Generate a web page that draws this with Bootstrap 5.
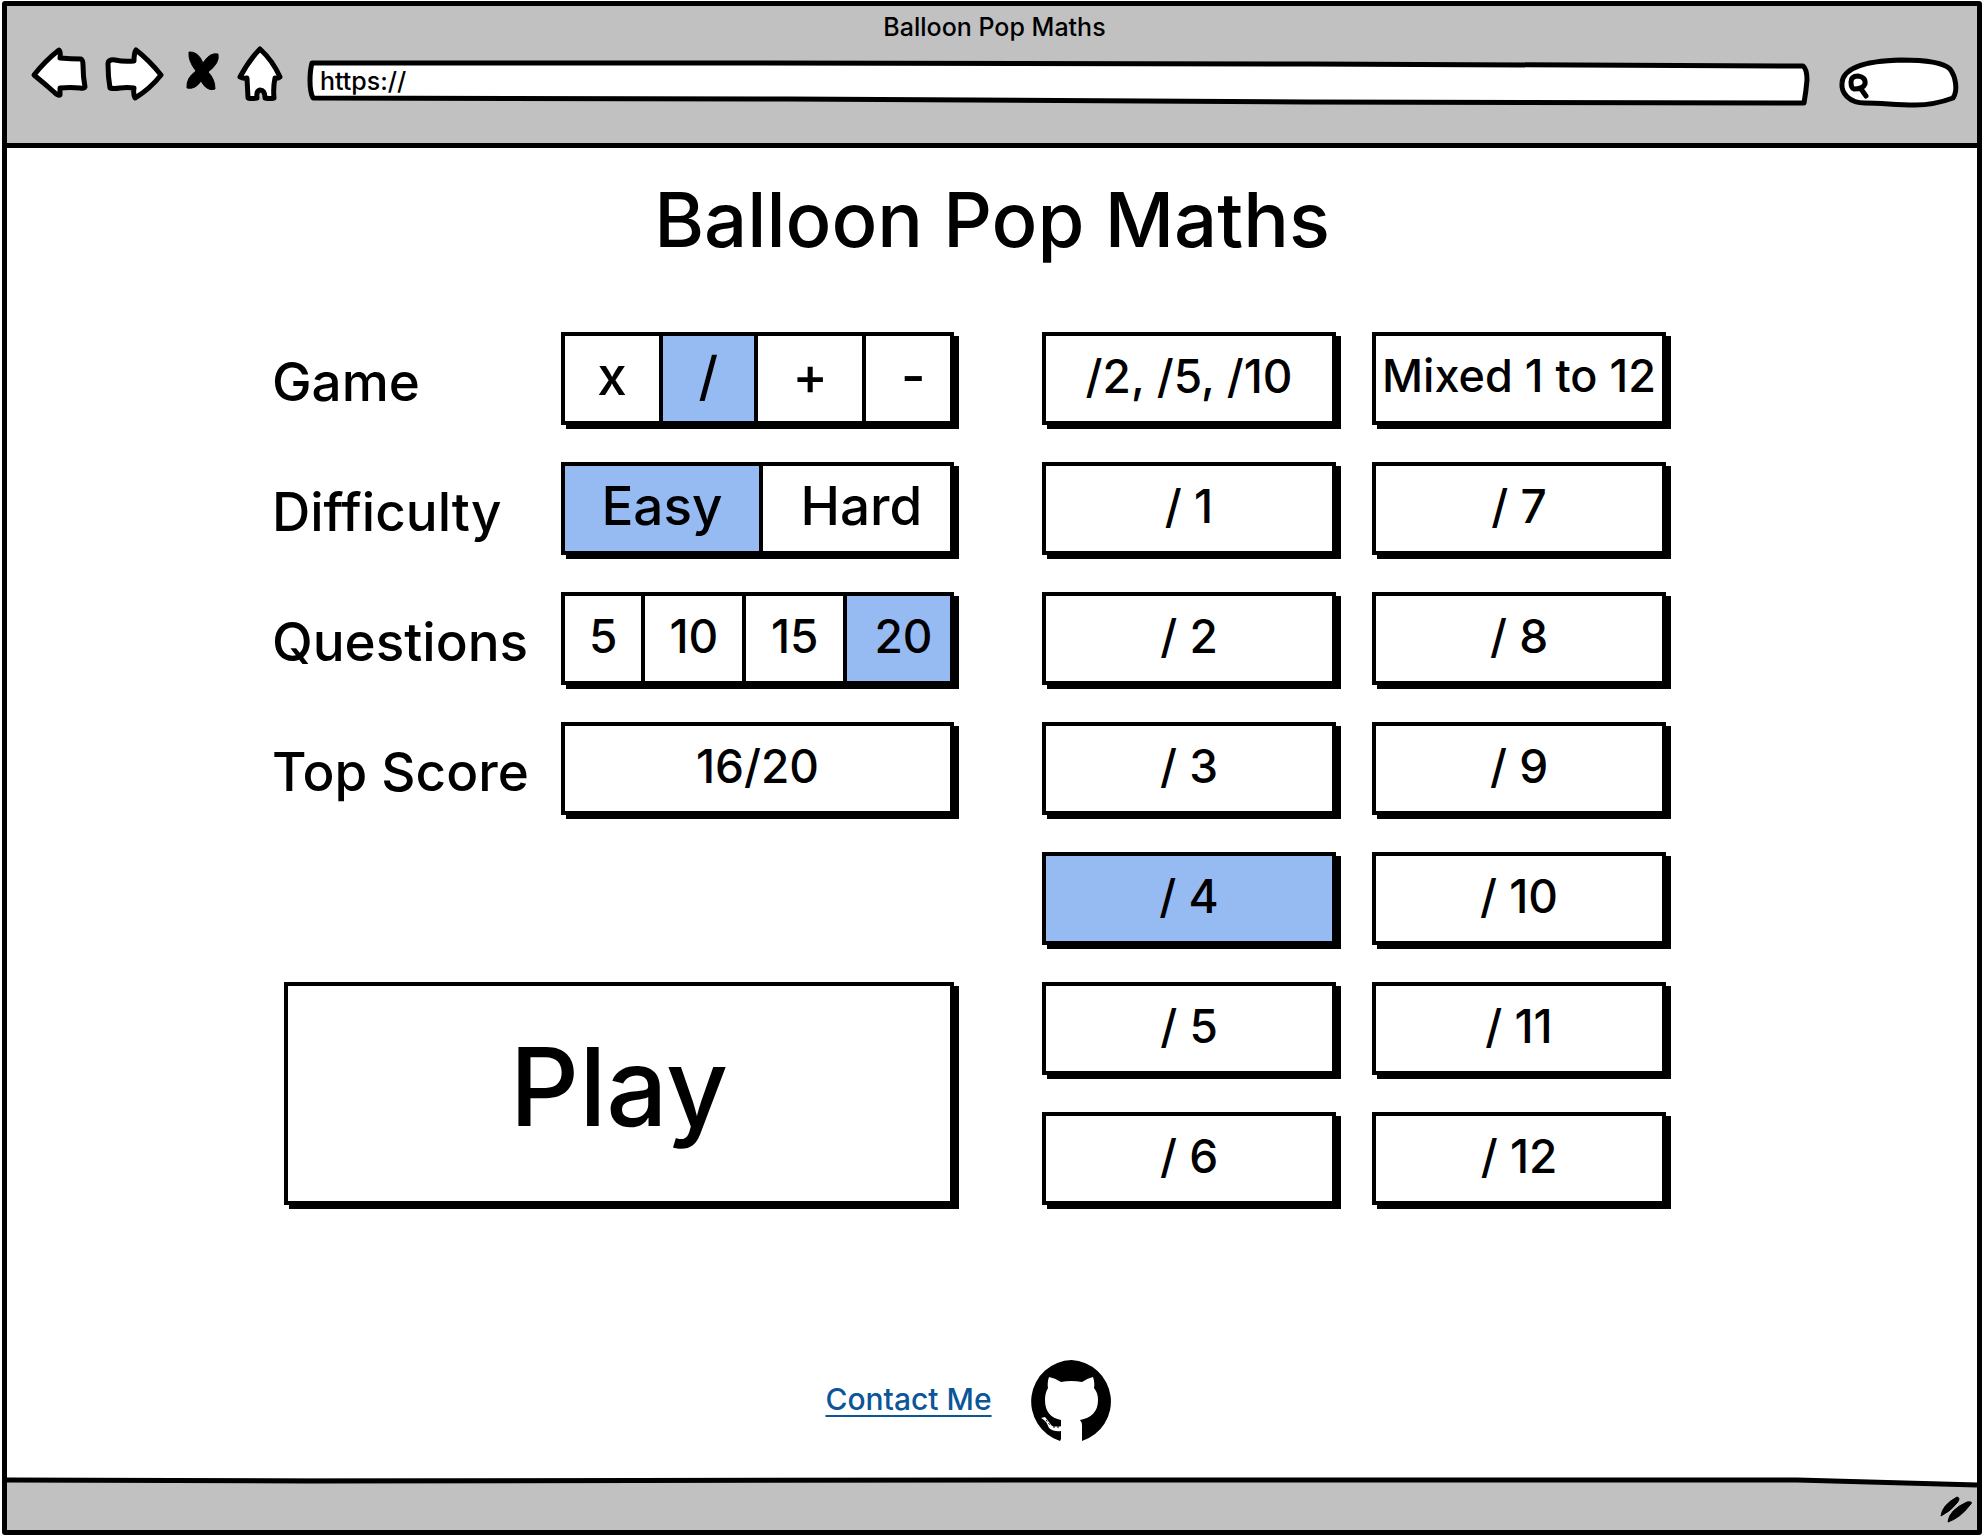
<!DOCTYPE html>
<html lang="en">
<head>
<meta charset="utf-8">
<meta name="viewport" content="width=device-width, initial-scale=1">
<title>Balloon Pop Maths</title>
<link href="https://cdn.jsdelivr.net/npm/bootstrap@5.3.0/dist/css/bootstrap.min.css" rel="stylesheet">
<style>
  :root { --ink: #000; --chrome: #c1c1c1; --pick: #95bbf2; }
  body { font-family: Inter, "Open Sans", sans-serif; font-weight: 500; color: var(--ink); background: #fff; padding: 1px 2px; }
  .frame { min-height: calc(100vh - 2px); border: 5px solid var(--ink); border-radius: 3px; }
  svg { display: block; }
  .sketch { fill: #fff; stroke: var(--ink); stroke-width: 5; stroke-linejoin: round; stroke-linecap: round; }

  /* browser chrome */
  .chrome-top { background: var(--chrome); border-bottom: 5px solid var(--ink); padding: 6px 18px 37px 23px; }
  .chrome-title { font-size: 25px; line-height: 30px; margin-bottom: 4px; }
  .toolbar { height: 60px; gap: 16px; }
  .tool { background: none; border: 0; padding: 0; }
  .address { height: 46px; margin-left: 8px; margin-top: 12px; }
  .finder { width: 120px; height: 52px; margin-left: 14px; margin-top: 9px; }
  .outline { position: absolute; inset: 0; width: 100%; height: 100%; overflow: visible; }
  .outline path { vector-effect: non-scaling-stroke; }
  .field { position: relative; width: 100%; height: 100%; background: none; border: 0; outline: 0; font-size: 25px; line-height: 30px; font-weight: 500; color: var(--ink); padding: 0 12px; }
  .finder .field { padding: 0 16px 0 32px; }
  .chrome-bottom { position: relative; height: 52px; background: var(--chrome); }
  .chrome-bottom .outline { height: 12px; }
  .grip { width: 34px; height: 28px; margin: 17px 3px 0 0; }

  /* page */
  .page-title { font-size: 76px; line-height: 92px; font-weight: 500; padding-top: 25px; margin-bottom: 67px; }
  .shifted { padding-right: 46px; }
  .board { max-width: 1394px; gap: 88px; }
  .settings { gap: 37px; }
  .topics { display: grid; grid-template-columns: 1fr 1fr; gap: 37px 36px; width: 624px; }
  .caption { font-size: 53px; line-height: 64px; margin-top: 18px; white-space: nowrap; }
  .control { width: 393px; }
  .box { height: 93px; border: 4px solid var(--ink); border-radius: 0; box-shadow: 5px 4px 0 var(--ink); background: #fff; }
  .face { display: flex; align-items: center; justify-content: center; padding: 0 0 6px; font-size: 46px; line-height: 56px; font-weight: 500; color: var(--ink); white-space: nowrap; --bs-btn-border-radius: 0; }
  .face:hover { color: var(--ink); }
  label.box, button.box { border-color: var(--ink) !important; }
  .btn-check:checked + .face { background: var(--pick); color: var(--ink); }
  .cell { border: 0; border-right: 4px solid var(--ink) !important; border-radius: 0; }
  .cell:last-child { border-right: 0 !important; padding-left: 10px; }
  .large .cell { font-size: 53px; }
  .by-game .cell:nth-of-type(1) { flex: 97; }
  .by-game .cell:nth-of-type(2) { flex: 94; }
  .by-game .cell:nth-of-type(3) { flex: 108; }
  .by-game .cell:nth-of-type(4) { flex: 76; }
  .by-level .cell { flex: 196; }
  .by-level .cell:last-child { flex: 179; }
  .by-count .cell { flex: 100; }
  .by-count .cell:nth-of-type(1) { flex: 79; }
  .by-count .cell:nth-of-type(4) { flex: 96; }
  .long { font-size: 45px; }
  .play { height: 223px; margin: 130px 0 0 12px; font-size: 108px; line-height: 130px; padding-bottom: 14px; }
  .links { gap: 38px; margin-top: 155px; }
  .contact { font-size: 30px; line-height: 36px; padding-bottom: 4px; color: #0b5599; text-decoration-thickness: 2px; text-underline-offset: 5px; }
</style>
</head>
<body>
<div class="frame d-flex flex-column">
  <header class="chrome-top">
    <div class="chrome-title text-center">Balloon Pop Maths</div>
    <div class="toolbar d-flex">
      <button class="tool" type="button" aria-label="Back">
        <svg width="58" height="60" viewBox="30 46 58 60"><path class="sketch" d="M34 75Q45 61 59 50Q61 52 60 58Q71 59 81 59Q83 60 83 65Q83 77 85 87Q84 89 80 88Q70 87 60 88L60 95Q58 96 54 92Q45 84 34 75Z"/></svg>
      </button>
      <button class="tool" type="button" aria-label="Forward">
        <svg width="60" height="60" viewBox="104 46 60 60"><path class="sketch" d="M161 75Q149 60 136 50Q134 53 134 61Q124 62 115 60Q108 59 108 64Q108 77 110 88Q114 89 120 88Q127 87 134 88Q133 94 135 98Q150 89 161 75Z"/></svg>
      </button>
      <button class="tool" type="button" aria-label="Stop">
        <svg width="40" height="60" viewBox="181 46 40 60"><path d="M190 52Q199 51 204 63Q211 52 219 54Q221 63 209 72Q216 79 216 89Q208 92 202 81Q196 90 188 88Q187 78 197 71Q189 61 190 52Z" stroke="#000" stroke-width="1"/></svg>
      </button>
      <button class="tool" type="button" aria-label="Home">
        <svg width="48" height="60" viewBox="236 46 48 60"><path class="sketch" d="M260 49Q249 60 240 77Q243 79 247 78L248 98Q252 99 257 98Q256 91 260 90Q265 90 265 98Q270 99 274 98Q273 87 275 78Q278 79 280 77Q273 61 260 49Z"/></svg>
      </button>
      <div class="address position-relative flex-grow-1">
        <svg class="outline" viewBox="0 0 1501 46" preserveAspectRatio="none"><path class="sketch" d="M4 5L450 5L1000 6L1495 8Q1499 11 1499 22Q1498 34 1496 45L1000 44L480 41L5 40Q2 34 2 23Q2 12 4 5Z"/></svg>
        <input class="field" type="text" value="https://" aria-label="Address">
      </div>
      <div class="finder position-relative">
        <svg class="outline" viewBox="0 0 120 52" preserveAspectRatio="none"><path class="sketch" d="M26 48C10 48 2 38 3 28C4 14 22 6 62 5C92 5 106 9 111 14C117 22 119 36 114 43C106 46 94 50 76 50C56 50 44 48 26 48Z"/><path d="M12 27Q12 21 19 21Q27 22 26 29Q24 34 15 34Q12 33 12 27ZM22 34L27 41" fill="none" stroke="#000" stroke-width="5" stroke-linecap="round"/></svg>
        <input class="field" type="text" aria-label="Search">
      </div>
    </div>
  </header>

  <main class="flex-grow-1">
    <h1 class="page-title text-center">Balloon Pop Maths</h1>
    <div class="shifted">
      <form class="board d-flex mx-auto">
        <div class="settings d-flex flex-column flex-grow-1">
          <div class="d-flex justify-content-between align-items-start">
            <div class="caption" id="cap-game">Game</div>
            <div class="control box d-flex large by-game" role="radiogroup" aria-labelledby="cap-game">
              <input class="btn-check" type="radio" name="game" id="g1"><label class="btn face cell" for="g1">x</label>
              <input class="btn-check" type="radio" name="game" id="g2" checked><label class="btn face cell" for="g2">/</label>
              <input class="btn-check" type="radio" name="game" id="g3"><label class="btn face cell" for="g3">+</label>
              <input class="btn-check" type="radio" name="game" id="g4"><label class="btn face cell" for="g4">-</label>
            </div>
          </div>
          <div class="d-flex justify-content-between align-items-start">
            <div class="caption" id="cap-level">Difficulty</div>
            <div class="control box d-flex large by-level" role="radiogroup" aria-labelledby="cap-level">
              <input class="btn-check" type="radio" name="level" id="l1" checked><label class="btn face cell" for="l1">Easy</label>
              <input class="btn-check" type="radio" name="level" id="l2"><label class="btn face cell" for="l2">Hard</label>
            </div>
          </div>
          <div class="d-flex justify-content-between align-items-start">
            <div class="caption" id="cap-count">Questions</div>
            <div class="control box d-flex by-count" role="radiogroup" aria-labelledby="cap-count">
              <input class="btn-check" type="radio" name="count" id="q1"><label class="btn face cell" for="q1">5</label>
              <input class="btn-check" type="radio" name="count" id="q2"><label class="btn face cell" for="q2">10</label>
              <input class="btn-check" type="radio" name="count" id="q3"><label class="btn face cell" for="q3">15</label>
              <input class="btn-check" type="radio" name="count" id="q4" checked><label class="btn face cell" for="q4">20</label>
            </div>
          </div>
          <div class="d-flex justify-content-between align-items-start">
            <label class="caption" for="top-score">Top Score</label>
            <output class="control box face" id="top-score">16/20</output>
          </div>
          <button class="btn box face play" type="button">Play</button>
        </div>

        <div class="topics flex-shrink-0" role="radiogroup" aria-label="Numbers">
          <div class="d-grid"><input class="btn-check" type="radio" name="topic" id="t0"><label class="btn box face" for="t0">/2, /5, /10</label></div>
          <div class="d-grid"><input class="btn-check" type="radio" name="topic" id="tm"><label class="btn box face long" for="tm">Mixed 1 to 12</label></div>
          <div class="d-grid"><input class="btn-check" type="radio" name="topic" id="t1"><label class="btn box face" for="t1">/ 1</label></div>
          <div class="d-grid"><input class="btn-check" type="radio" name="topic" id="t7"><label class="btn box face" for="t7">/ 7</label></div>
          <div class="d-grid"><input class="btn-check" type="radio" name="topic" id="t2"><label class="btn box face" for="t2">/ 2</label></div>
          <div class="d-grid"><input class="btn-check" type="radio" name="topic" id="t8"><label class="btn box face" for="t8">/ 8</label></div>
          <div class="d-grid"><input class="btn-check" type="radio" name="topic" id="t3"><label class="btn box face" for="t3">/ 3</label></div>
          <div class="d-grid"><input class="btn-check" type="radio" name="topic" id="t9"><label class="btn box face" for="t9">/ 9</label></div>
          <div class="d-grid"><input class="btn-check" type="radio" name="topic" id="t4" checked><label class="btn box face" for="t4">/ 4</label></div>
          <div class="d-grid"><input class="btn-check" type="radio" name="topic" id="t10"><label class="btn box face" for="t10">/ 10</label></div>
          <div class="d-grid"><input class="btn-check" type="radio" name="topic" id="t5"><label class="btn box face" for="t5">/ 5</label></div>
          <div class="d-grid"><input class="btn-check" type="radio" name="topic" id="t11"><label class="btn box face" for="t11">/ 11</label></div>
          <div class="d-grid"><input class="btn-check" type="radio" name="topic" id="t6"><label class="btn box face" for="t6">/ 6</label></div>
          <div class="d-grid"><input class="btn-check" type="radio" name="topic" id="t12"><label class="btn box face" for="t12">/ 12</label></div>
        </div>
      </form>
      <div class="links d-flex justify-content-center align-items-center">
        <a class="contact" href="#contact">Contact Me</a>
        <a href="#github" aria-label="GitHub">
          <svg width="83" height="82" viewBox="0 0 83 82">
            <path d="M41.500 0A41.500 41.500 0 0 0 30 81L31 79V60C21 58 15 52 15 40Q15 33 18 28Q17 22 19 17Q25 18 31 22Q41 20 52 22Q58 18 63 17Q65 22 64 28Q68 33 68 40C68 52 61 58 50 60Q52 62 52 66V81A41.500 41.500 0 0 0 41.500 0Z"/>
            <path d="M31 71Q24 72 19 68Q16 60 11 58L15 57Q19 62 22 66Q27 67 32 66V71Z" fill="#fff"/>
            <path d="M16 60L20 65M23 67L30 67" stroke="#000" stroke-width="1" stroke-dasharray="2 2" fill="none"/>
          </svg>
        </a>
      </div>
    </div>
  </main>

  <footer class="chrome-bottom d-flex justify-content-end">
    <svg class="outline" viewBox="0 0 1970 12" preserveAspectRatio="none"><path d="M0 0H1790L1970 5V0Z" fill="#fff"/><path d="M0 2L300 3L1000 2L1790 2L1970 7" fill="none" stroke="#000" stroke-width="5"/></svg>
    <svg class="grip" viewBox="1940 1496 34 28"><path d="M1941 1517Q1942 1506 1957 1498Q1961 1499 1957 1504Q1951 1512 1941 1517ZM1948 1523Q1949 1511 1967 1503Q1974 1502 1970 1506Q1960 1519 1948 1523Z" stroke="#000" stroke-width="1"/></svg>
  </footer>
</div>
<script src="https://cdn.jsdelivr.net/npm/bootstrap@5.3.0/dist/js/bootstrap.bundle.min.js"></script>
</body>
</html>
